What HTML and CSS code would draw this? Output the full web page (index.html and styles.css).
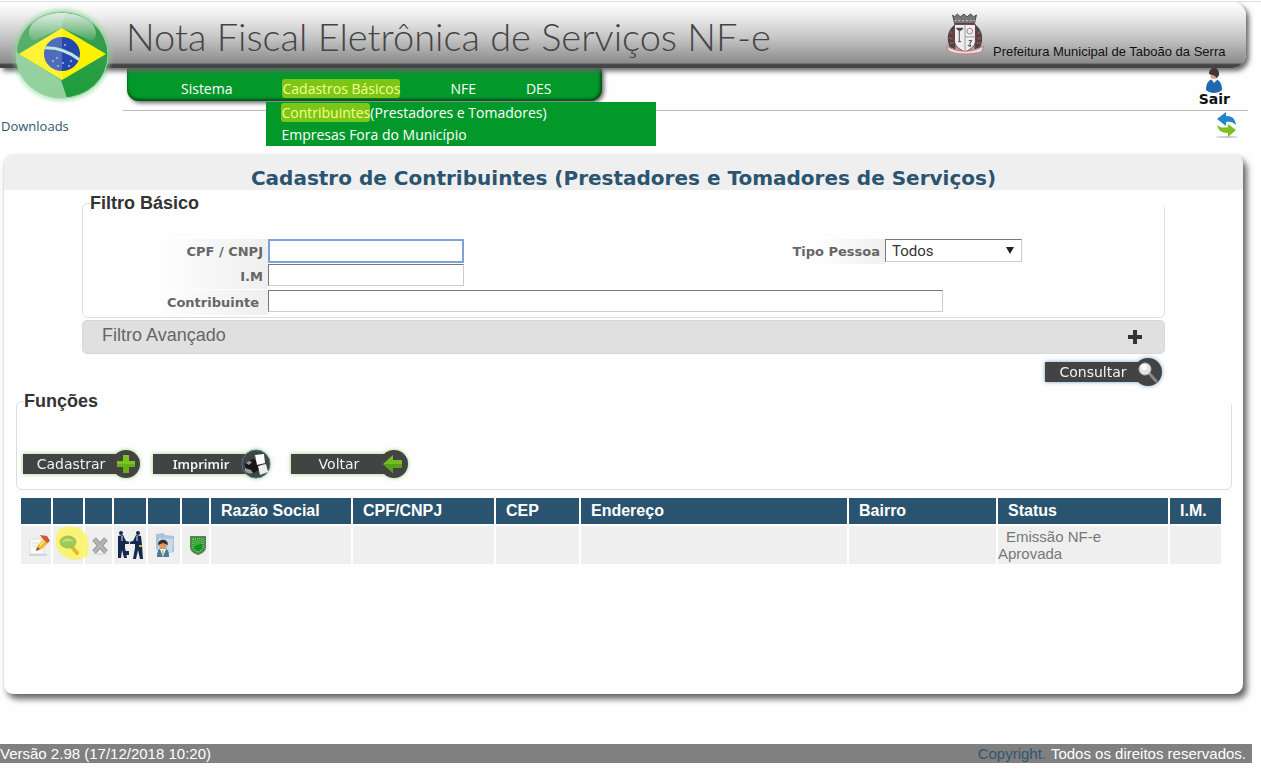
FILE: index.html
```html
<!DOCTYPE html>
<html lang="pt-br">

<head>
    <meta charset="UTF-8">
    <meta name="viewport" content="width=device-width, initial-scale=1.0">
    <title>Nota Fiscal Eletrônica de Serviços NF-e</title>
    <link rel="stylesheet" href="styles.css">
</head>

<body>
    <div class="page">
        <!-- topo -->
        <header class="topo">
            <svg class="logo" viewBox="0 0 104 104">
                <defs>
                    <radialGradient id="halo">
                        <stop offset="0.8" stop-color="#5fc96c" stop-opacity="0.9" />
                        <stop offset="1" stop-color="#9be0a2" stop-opacity="0" />
                    </radialGradient>
                    <linearGradient id="verde" x1="0" y1="0" x2="0" y2="1">
                        <stop offset="0" stop-color="#3c9a50" />
                        <stop offset="0.5" stop-color="#2f9f48" />
                        <stop offset="1" stop-color="#1b9c3a" />
                    </linearGradient>
                    <linearGradient id="brilho" x1="0" y1="0" x2="0" y2="1">
                        <stop offset="0" stop-color="#fff" stop-opacity="0.8" />
                        <stop offset="1" stop-color="#fff" stop-opacity="0.1" />
                    </linearGradient>
                    <clipPath id="bola"><ellipse cx="52" cy="52" rx="46" ry="43" /></clipPath>
                    <clipPath id="globo"><ellipse cx="52" cy="51" rx="18" ry="17" /></clipPath>
                </defs>
                <ellipse cx="52" cy="52" rx="52" ry="49" fill="url(#halo)" />
                <ellipse cx="52" cy="52" rx="46" ry="43" fill="url(#verde)" />
                <g clip-path="url(#bola)">
                    <path d="M0 0H58L51 25V77L59 104H0z" fill="#fff" opacity="0.18" />
                    <path d="M0 40 9 51 51 77 60 104H0z" fill="#c4e8c8" opacity="0.6" />
                </g>
                <path d="M52 25 96 51 52 77 9 51z" fill="#fdf300" />
                <path d="M52 25V77L9 51z" fill="#fff45c" opacity="0.6" />
                <ellipse cx="52" cy="51" rx="18" ry="17" fill="#2647ac" />
                <g clip-path="url(#globo)">
                    <path d="M30 30h22v40H30z" fill="#fff" opacity="0.2" />
                    <path d="M33 45c14-1 27 4 38 13" fill="none" stroke="#bfe6df" stroke-width="3" />
                    <g fill="#a9bdf0">
                        <circle cx="43" cy="58" r="1" /><circle cx="48" cy="63" r="1" /><circle cx="53" cy="60" r="1" />
                        <circle cx="59" cy="63" r="1" /><circle cx="47" cy="55" r="1" />
                        <circle cx="61" cy="58" r="1" /><circle cx="55" cy="42" r="1" />
                    </g>
                </g>
                <path d="M19 30C19 18 34 10 52 10s34 8 34 20c0 8-5 9-9 6L52 25 28 36c-4 3-9 0-9-6z" fill="url(#brilho)" />
                <ellipse cx="52" cy="52" rx="46" ry="43" fill="none" stroke="#9fcfa7" stroke-width="1" />
            </svg>
            <h1 class="nome">Nota Fiscal Eletrônica de Serviços NF-e</h1>
            <div class="prefeitura">
                <svg class="brasao" viewBox="0 0 42 44">
                    <path d="M8 2l2 2 3-3 3 3 4-3 3 3 4-3 3 3 3-2-2 9H10z" fill="#777" stroke="#444" />
                    <path d="M10 8h22" stroke="#ccc" stroke-dasharray="2 2" />
                    <path d="M9 13C3 18 1 27 5 36l6 2V13zM33 13c6 5 8 14 4 23l-6 2V13z" fill="#424a45" />
                    <path d="M5 19l3 3M4 26l4 1M37 19l-3 3M38 26l-4 1M5 32l4-1M37 32l-4-1" stroke="#b53b4b" stroke-width="2" />
                    <path d="M10 12h22v17c0 6-5 9-11 12-6-3-11-6-11-12z" fill="#eee" stroke="#7b3039" />
                    <path d="M21 12v28M21 25h11" stroke="#999" />
                    <path d="M12 16h7l-2 2h-3zM15 18v12M14 30h3" stroke="#444" fill="#444" />
                    <circle cx="26" cy="19" r="3" fill="none" stroke="#888" />
                    <path d="M25 29h3l-2 3 1 3-3-1" fill="none" stroke="#333" />
                    <path d="M1 35c5 1 8 5 20 5s15-4 20-5l-3 6c-5 1-10 2-17 2S8 42 4 40z" fill="#e8dcdc" stroke="#c77780" />
                </svg>
                <span>Prefeitura Municipal de Taboão da Serra</span>
            </div>
        </header>

        <!-- menu principal -->
        <div class="faixa">
            <nav class="menu">
                <a href="#">Sistema</a>
                <div class="item">
                    <a href="#"><mark>Cadastros Básicos</mark></a>
                    <div class="submenu">
                        <a href="#"><mark>Contribuintes</mark>(Prestadores e Tomadores)</a>
                        <a href="#">Empresas Fora do Município</a>
                    </div>
                </div>
                <a href="#">NFE</a>
                <a href="#">DES</a>
            </nav>
            <a href="#" class="sair">
                <svg viewBox="0 0 18 26" width="18" height="26">
                    <path d="M1 22c0-7 3-11 8-11s8 4 8 11c-4 4-12 4-16 0z" fill="#1c69ad" />
                    <path d="M6 11l3 4 4-4-1-3H6z" fill="#e9f0f6" />
                    <ellipse cx="9" cy="6" rx="4" ry="5" fill="#d7a47e" />
                    <path d="M4 6c0-8 11-8 10 1-1 2-2 3-3 3 0-3-4-3-7-4z" fill="#443733" />
                </svg>
                <span>Sair</span>
            </a>
        </div>
        <div class="atalhos">
            <a href="#" class="downloads">Downloads</a>
            <a href="#" class="atualizar" aria-label="Atualizar">
                <svg viewBox="0 0 24 28" width="24" height="28">
                    <ellipse cx="12" cy="26" rx="11" ry="1" fill="#ccc" />
                    <path d="M2 8 11 1v4c7 0 9 3 10 9-3-3-6-4-10-3v4z" fill="#2585cc" />
                    <path d="M21 19 13 26v-4c-7 0-10-3-11-8 3 3 7 3 11 2v-3z" fill="#7bc01e" />
                </svg>
            </a>
        </div>

        <!-- conteudo -->
        <main class="painel">
            <h2 class="titulo">Cadastro de Contribuintes (Prestadores e Tomadores de Serviços)</h2>

            <form class="filtros">
                <fieldset class="grupo">
                    <legend>Filtro Básico</legend>
                    <div class="linha">
                        <label for="cpf">CPF / CNPJ</label>
                        <input type="text" id="cpf" class="ativo">
                        <label for="tipo" class="tipo">Tipo Pessoa</label>
                        <div class="selecao">
                            <select id="tipo">
                                <option>Todos</option>
                            </select>
                        </div>
                    </div>
                    <div class="linha">
                        <label for="im">I.M</label>
                        <input type="text" id="im">
                    </div>
                    <div class="linha ultima">
                        <label for="contribuinte">Contribuinte</label>
                        <input type="text" id="contribuinte" class="longo">
                    </div>
                </fieldset>
                <button type="button" class="avancado">
                    <span>Filtro Avançado</span>
                    <svg viewBox="0 0 14 14" width="14" height="14">
                        <path d="M7 0v14M0 7h14" stroke="#333" stroke-width="4" />
                    </svg>
                </button>
                <div class="acao">
                    <button type="button" class="botao azul">
                        <span>Consultar</span>
                        <svg viewBox="0 0 30 30" width="30" height="30">
                            <circle cx="15" cy="15" r="14" fill="#434343" />
                            <path d="M16 16l7 8" stroke="#888" stroke-width="3" stroke-linecap="round" />
                            <circle cx="12" cy="12" r="6" fill="#e4e4e4" stroke="#bbb" />
                            <circle cx="11" cy="10" r="3" fill="#fff" />
                        </svg>
                    </button>
                </div>
            </form>

            <fieldset class="grupo funcoes">
                <legend>Funções</legend>
                <div class="botoes">
                    <button type="button" class="botao">
                        <span>Cadastrar</span>
                        <svg viewBox="0 0 30 30" width="30" height="30">
                            <circle cx="15" cy="15" r="14" fill="#434343" />
                            <path d="M12 6h6v6h6v6h-6v6h-6v-6H6v-6h6z" fill="#7cc51d" />
                            <path d="M6 15h18v3h-6v6h-6v-6H6z" fill="#66b015" />
                        </svg>
                    </button>
                    <button type="button" class="botao imprimir">
                        <span>Imprimir</span>
                        <svg viewBox="0 0 30 30" width="30" height="30">
                            <circle cx="15" cy="15" r="14" fill="#434343" stroke="#4b78a8" />
                            <path d="M4 15l7-5 8 3 1 6-7 5-8-3z" fill="#171717" />
                            <path d="M14 6l9-1 1 9-8 2z" fill="#fff" />
                            <path d="M17 17l8-2 2 8-8 3z" fill="#eee" />
                            <path d="M4 19l6 2 2 3c-4 1-6 0-8-2zM5 14l3-2 3 1-3 3z" fill="#999" />
                        </svg>
                    </button>
                    <button type="button" class="botao voltar">
                        <span>Voltar</span>
                        <svg viewBox="0 0 30 30" width="30" height="30">
                            <circle cx="15" cy="15" r="14" fill="#434343" />
                            <path d="M4 15l10-9v5h9v8h-9v5z" fill="#74bd22" />
                            <path d="M4 15h19v4h-9v5z" fill="#5a9f18" />
                        </svg>
                    </button>
                </div>
            </fieldset>

            <div class="lista">
                <table>
                    <colgroup>
                        <col class="c30"><col class="c30"><col class="c27"><col class="c32"><col class="c32"><col class="c27">
                        <col class="c140"><col class="c141"><col class="c83"><col><col class="c147"><col class="c170"><col class="c51">
                    </colgroup>
                    <thead>
                        <tr>
                            <th></th><th></th><th></th><th></th><th></th><th></th>
                            <th>Razão Social</th>
                            <th>CPF/CNPJ</th>
                            <th>CEP</th>
                            <th>Endereço</th>
                            <th>Bairro</th>
                            <th>Status</th>
                            <th>I.M.</th>
                        </tr>
                    </thead>
                    <tbody>
                        <tr>
                            <td class="icone">
                                <a href="#" class="editar" aria-label="Editar">
                                    <svg viewBox="0 0 24 24" width="24" height="24">
                                        <path d="M3 6h14v15H3z" fill="#fafafa" stroke="#ddd" />
                                        <path d="M2 22h18" stroke="#bbb" stroke-width="1" />
                                        <path d="M5 10h7M5 13h6" stroke="#ddd" />
                                        <path d="M9 18l2-6 6-7 5 4-7 7z" fill="#f7b531" />
                                        <path d="M13 13l5-7" stroke="#ffdf7b" stroke-width="2" />
                                        <path d="M13 2l7 1 3 5-3 2-5-5z" fill="#c9583e" />
                                        <path d="M9 18l1-4 3 2z" fill="#705637" />
                                    </svg>
                                </a>
                            </td>
                            <td class="icone">
                                <a href="#" class="lupa" aria-label="Visualizar">
                                    <svg class="marca" viewBox="0 0 40 40">
                                        <path d="M5 8C10 1 25 1 32 8c6 7 6 14 5 25-7 6-19 6-26 1C4 29 0 18 5 8z" fill="#fbf55a" opacity="0.8" />
                                    </svg>
                                    <svg class="vidro" viewBox="0 0 24 24" width="24" height="24">
                                        <path d="M16 14l5 6" stroke="#e0bd2b" stroke-width="4" stroke-linecap="round" />
                                        <ellipse cx="12" cy="9" rx="8" ry="6" fill="#9ccb57" stroke="#a9b950" stroke-width="1" />
                                        <path d="M6 9c2-4 9-4 11-1-4 0-7 0-11 1z" fill="#c3e08b" />
                                    </svg>
                                </a>
                            </td>
                            <td class="icone">
                                <a href="#" class="excluir" aria-label="Excluir">
                                    <svg viewBox="0 0 24 24" width="24" height="24">
                                        <ellipse cx="12" cy="21" rx="8" ry="1" fill="#ddd" />
                                        <path d="M6 6l12 13M18 6 6 19" stroke="#999" stroke-width="5" />
                                        <path d="M6 6l12 13M18 6 6 19" stroke="#b4b4b4" stroke-width="3" />
                                    </svg>
                                </a>
                            </td>
                            <td class="icone">
                                <a href="#" aria-label="Procuradores">
                                    <svg viewBox="0 0 28 30" width="28" height="30">
                                        <g fill="#14294f">
                                            <circle cx="5" cy="3" r="2" /><circle cx="22" cy="3" r="2" />
                                            <path d="M2 6l5-1 3 6 4 1v2l-5 0v4l2 10H8L6 20 5 28H2l0-12zM25 6l-5-1-3 6-4 1v2l6 0v4l-2 11h3l2-9 2 9h3l-1-14z" />
                                            <path d="M8 21h5v4H8z" />
                                        </g>
                                        <path d="M6 6v5M21 6v5" stroke="#dce4ef" />
                                        <path d="M23 16h3" stroke="#d5a933" stroke-width="2" />
                                    </svg>
                                </a>
                            </td>
                            <td class="icone">
                                <a href="#" aria-label="Cadastro">
                                    <svg viewBox="0 0 24 28" width="24" height="28">
                                        <path d="M4 3l7-1 2 2 9 1v16l-12 2-6-5z" fill="#a9c3d9" />
                                        <path d="M7 7l14 1-1 13-10 1-4-5z" fill="#c7dbea" />
                                        <path d="M5 26c0-7 2-9 6-9s6 2 6 9z" fill="#4a7a95" />
                                        <path d="M8 18l3 8 3-8z" fill="#fff" />
                                        <path d="M11 19v5" stroke="#7a9d3d" />
                                        <circle cx="11" cy="14" r="4" fill="#d99b63" />
                                        <path d="M6 14c0-7 10-7 10 0l-5-2z" fill="#3b2b25" />
                                    </svg>
                                </a>
                            </td>
                            <td class="icone">
                                <a href="#" class="seguranca" aria-label="Segurança">
                                    <svg viewBox="0 0 18 22" width="18" height="22">
                                        <path d="M2 3h14v10c0 4-4 6-7 7-3-1-7-3-7-7z" fill="#2b9c35" stroke="#58854f" stroke-width="2" />
                                        <path d="M4 5h10v8c0 3-3 4-5 5-2-1-5-2-5-5z" fill="#189025" stroke="#b9e5b4" stroke-dasharray="1 1" />
                                        <path d="M5 6h8v4c-3 0-6 1-8 3z" fill="#45aa43" />
                                    </svg>
                                </a>
                            </td>
                            <td></td>
                            <td></td>
                            <td></td>
                            <td></td>
                            <td></td>
                            <td class="status">Emissão NF-e<br>Aprovada</td>
                            <td></td>
                        </tr>
                    </tbody>
                </table>
            </div>
        </main>

        <!-- rodape -->
        <footer class="rodape">
            <span>Versão 2.98 (17/12/2018 10:20)</span>
            <span><a href="#">Copyright.</a> Todos os direitos reservados.</span>
        </footer>
    </div>
</body>

</html>
```
FILE: styles.css
```css
* {
    box-sizing: border-box;
}

html {
    padding-top: 1px;
    background-color: #fefefe;
}

body {
    margin: 0;
    border-top: 1px solid #ddd;
    font-family: "Liberation Sans", Arial, sans-serif;
}

a {
    text-decoration: none;
}

svg {
    display: block;
}

.page {
    display: flex;
    flex-direction: column;
    min-height: 761px;
    margin-right: 9px;
}

/* topo */
.topo {
    position: relative;
    z-index: 2;
    display: flex;
    justify-content: space-between;
    height: 66px;
    margin-right: 6px;
    padding: 0 13px 0 126px;
    border-radius: 0 14px 14px 0;
    background: linear-gradient(#fff 0%, #eee 20%, #c4c4c4 55%, #8c8c8c 92%, #444 95%, #444 100%);
    box-shadow: 3px 3px 5px #666;
}

.logo {
    position: absolute;
    left: 10px;
    top: 1px;
    width: 104px;
    height: 104px;
}

.nome {
    margin: 0;
    font-family: Lato, sans-serif;
    font-size: 38px;
    font-weight: 300;
    line-height: 68px;
    color: #444;
    white-space: nowrap;
}

.prefeitura {
    display: flex;
    gap: 8px;
    padding-top: 10px;
    font-size: 13px;
    color: #111;
}

.prefeitura span {
    min-width: 240px;
    margin-top: 32px;
    line-height: 16px;
    white-space: nowrap;
}

.brasao {
    width: 40px;
    height: 44px;
}

/* menu */
.faixa {
    display: flex;
    justify-content: space-between;
    height: 43px;
    margin: 0 4px 0 123px;
    padding-left: 4px;
    border-bottom: 1px solid #bbb;
}

.menu {
    display: flex;
    gap: 50px;
    height: 33px;
    padding: 10px 50px 0 54px;
    border-radius: 0 0 12px 12px;
    background-color: #02992a;
    box-shadow: inset 0 -2px 3px #05501a, inset -2px 0 3px #05501a, 2px 2px 4px #666;
    font-family: "Open Sans", sans-serif;
    font-size: 14px;
    line-height: 22px;
}

.menu a {
    color: #fff;
    white-space: nowrap;
}

.menu mark {
    background-color: #7cc618;
    color: #f6ff8c;
    border-radius: 3px;
}

.item {
    position: relative;
}

.submenu {
    position: absolute;
    z-index: 3;
    left: -16px;
    top: 24px;
    width: 390px;
    padding-left: 15px;
    background-color: #02992a;
}

.submenu a {
    display: block;
}

.sair {
    display: flex;
    flex-direction: column;
    align-items: center;
    position: relative;
    z-index: 3;
    margin-right: 18px;
    color: #111;
    font-family: "DejaVu Sans", Verdana, sans-serif;
    font-size: 14px;
    font-weight: bold;
    line-height: 10px;
}

.atalhos {
    display: flex;
    justify-content: space-between;
    height: 43px;
    padding: 0 13px 0 1px;
}

.downloads {
    padding-top: 5px;
    font-family: "Open Sans", sans-serif;
    font-size: 13px;
    line-height: 20px;
    color: #2f566f;
}

/* painel */
.painel {
    min-height: 540px;
    margin: 0 9px 0 3px;
    border-left: 1px solid #e4e4e4;
    border-radius: 10px;
    background-color: #fefefe;
    box-shadow: 4px 5px 6px #666;
}

.titulo {
    margin: 0;
    padding-top: 12px;
    border-radius: 10px 10px 0 0;
    background-color: #efefef;
    color: #2a5470;
    font-family: "DejaVu Sans", Verdana, sans-serif;
    font-size: 20px;
    line-height: 24px;
    text-align: center;
}

.filtros {
    margin: 3px 78px 0;
}

.grupo {
    margin: 0;
    padding: 0 0 2px;
    border: 1px solid #ddd;
    border-radius: 6px;
}

.grupo legend {
    width: calc(100% - 7px);
    margin-left: 7px;
    padding: 0;
    font-size: 18px;
    font-weight: bold;
    line-height: 20px;
    color: #333;
}

.linha {
    display: flex;
    height: 25px;
}

.linha:first-of-type {
    margin-top: 26px;
}

.linha label {
    width: 185px;
    padding: 0 5px;
    background: linear-gradient(to right, #fefefe 40%, #efefef);
    font-family: "DejaVu Sans", Verdana, sans-serif;
    font-size: 13px;
    font-weight: bold;
    line-height: 25px;
    text-align: right;
    color: #666;
}

.linha input,
.linha select {
    width: 196px;
    height: 22px;
    border: 1px solid #ccc;
    border-top-color: #777;
    border-left-color: #777;
    background-color: #fff;
}

.linha .ativo {
    border: 2px solid #7ea3d8;
    height: 24px;
    outline: none;
}

.linha .longo {
    width: 675px;
}

.linha .tipo {
    width: 115px;
    margin-left: auto;
    padding-left: 0;
}

.ultima {
    margin-top: 1px;
}

.ultima label {
    padding-right: 9px;
}

.selecao {
    position: relative;
    margin-right: 142px;
}

.linha select {
    width: 137px;
    height: 23px;
    padding: 0 6px;
    appearance: none;
    border-radius: 0;
    font-family: Roboto, sans-serif;
    font-size: 15px;
    color: #333;
}

.selecao::after {
    content: "";
    position: absolute;
    right: 8px;
    top: 8px;
    border: 4px solid transparent;
    border-top: 7px solid #222;
    border-bottom: 0;
    pointer-events: none;
}

.avancado {
    display: flex;
    align-items: center;
    justify-content: space-between;
    width: 100%;
    height: 34px;
    margin-top: 2px;
    padding: 0 22px 0 19px;
    border: 1px solid #d8d8d8;
    border-radius: 5px;
    background-color: #e0e0e0;
    font-family: "Liberation Sans", Arial, sans-serif;
    font-size: 18px;
    color: #666;
}

.avancado span {
    padding-bottom: 4px;
}

.acao {
    display: flex;
    justify-content: flex-end;
    padding: 8px 2px 0 0;
}

/* botoes escuros com icone redondo */
.botao {
    position: relative;
    width: 118px;
    height: 20px;
    padding: 0 22px 0 0;
    border: 0;
    background: linear-gradient(#434343, #434343) no-repeat 0 0 / 104px 20px;
    font-family: "DejaVu Sans", Verdana, sans-serif;
    font-size: 14px;
    line-height: 20px;
    color: #f2f2f2;
    filter: drop-shadow(0 0 2px #9fd070);
}

.botao svg {
    position: absolute;
    right: 0;
    top: -5px;
}

.azul {
    filter: drop-shadow(0 0 2px #6ea6d4);
}

.imprimir {
    font-family: "Noto Sans", sans-serif;
    font-size: 13px;
    font-weight: 600;
}

/* funcoes */
.funcoes {
    margin: 9px 11px 0 12px;
    padding-bottom: 15px;
}

.botoes {
    display: flex;
    gap: 12px;
    padding: 43px 0 0 6px;
}

.voltar {
    margin-left: 8px;
}

/* lista */
.lista {
    padding: 6px 20px 0 15px;
}

table {
    width: 100%;
    table-layout: fixed;
    border-spacing: 2px;
}

th {
    height: 26px;
    padding: 0 0 0 10px;
    background-color: #29536f;
    color: #fff;
    font-size: 16px;
    text-align: left;
}

td {
    height: 38px;
    padding: 0;
    background-color: #efefef;
    color: #777;
    font-size: 15px;
    line-height: 17px;
}

.icone a {
    display: flex;
    justify-content: center;
}

.icone .editar,
.icone .excluir,
.icone .seguranca {
    justify-content: flex-end;
}

.icone .seguranca {
    padding-right: 2px;
}

.status {
    text-indent: 8px;
}

.lupa {
    position: relative;
}

.marca {
    position: absolute;
    left: 0;
    top: -9px;
    width: 38px;
    height: 38px;
}

.vidro {
    position: relative;
}

.c27 { width: 27px; }
.c30 { width: 30px; }
.c32 { width: 32px; }
.c51 { width: 51px; }
.c83 { width: 83px; }
.c140 { width: 140px; }
.c141 { width: 141px; }
.c147 { width: 147px; }
.c170 { width: 170px; }

/* rodape */
.rodape {
    display: flex;
    justify-content: space-between;
    margin-top: auto;
    padding-right: 6px;
    background-color: #808080;
    color: #fff;
    font-size: 15px;
    line-height: 19px;
}

.rodape a {
    margin-right: 1px;
    color: #2f566f;
}
```
